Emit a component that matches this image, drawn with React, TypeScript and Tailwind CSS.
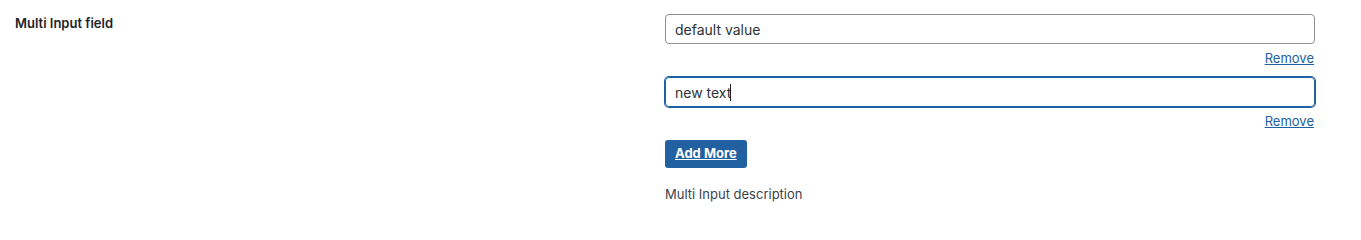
import React, { useState } from "react";

export default function App() {
    const [values, setValues] = useState<string[]>(["default value", "new text"]);

    const handleChange = (i: number, v: string) => {
        const next = [...values];
        next[i] = v;
        setValues(next);
    };
    const handleRemove = (i: number) => {
        setValues(values.filter((_, idx) => idx !== i));
    };
    const handleAdd = () => {
        setValues([...values, ""]);
    };

    return (
        <div className="w-[1361px] h-[216px] bg-white font-['Inter',sans-serif] flex flex-row">
            <div className="w-[665px] pl-[15px] pt-[16px]">
                <div className="text-[13px] leading-[15px] font-semibold text-[#1d2327]">Multi Input field</div>
            </div>
            <div className="w-[650px] pt-[14px] flex flex-col">
                {values.map((v, i) => (
                    <div key={i} className="flex flex-col mb-[9px]">
                        <div className="relative">
                            <input
                                type="text"
                                value={v}
                                onChange={(e) => handleChange(i, e.target.value)}
                                className={
                                    i === 1
                                        ? "h-[30px] w-full rounded-[4px] border border-[#2161a1] shadow-[0_0_0_1px_#2161a1] px-[9px] text-[14px] text-[#2c3338] outline-none"
                                        : "h-[30px] w-full rounded-[4px] border border-[#8c8f94] px-[9px] text-[14px] text-[#2c3338] outline-none"
                                }
                            />
                            {i === 1 && (
                                <span className="absolute left-[65px] top-[7px] w-[1px] h-[17px] bg-[#1d2327]" />
                            )}
                        </div>
                        <div className="flex justify-end mt-[4px]">
                            <a
                                href="#"
                                onClick={(e) => { e.preventDefault(); handleRemove(i); }}
                                className="text-[13px] leading-[20px] text-[#2161a1] underline mr-[1px]"
                            >
                                Remove
                            </a>
                        </div>
                    </div>
                ))}
                <div className="flex">
                    <button
                        onClick={handleAdd}
                        className="h-[28px] px-[10px] rounded-[3px] bg-[#2161a1] text-white text-[13px] font-bold underline"
                    >
                        Add More
                    </button>
                </div>
                <p className="mt-[16px] text-[13px] leading-[20px] text-[#3c434a]">Multi Input description</p>
            </div>
        </div>
    );
}
